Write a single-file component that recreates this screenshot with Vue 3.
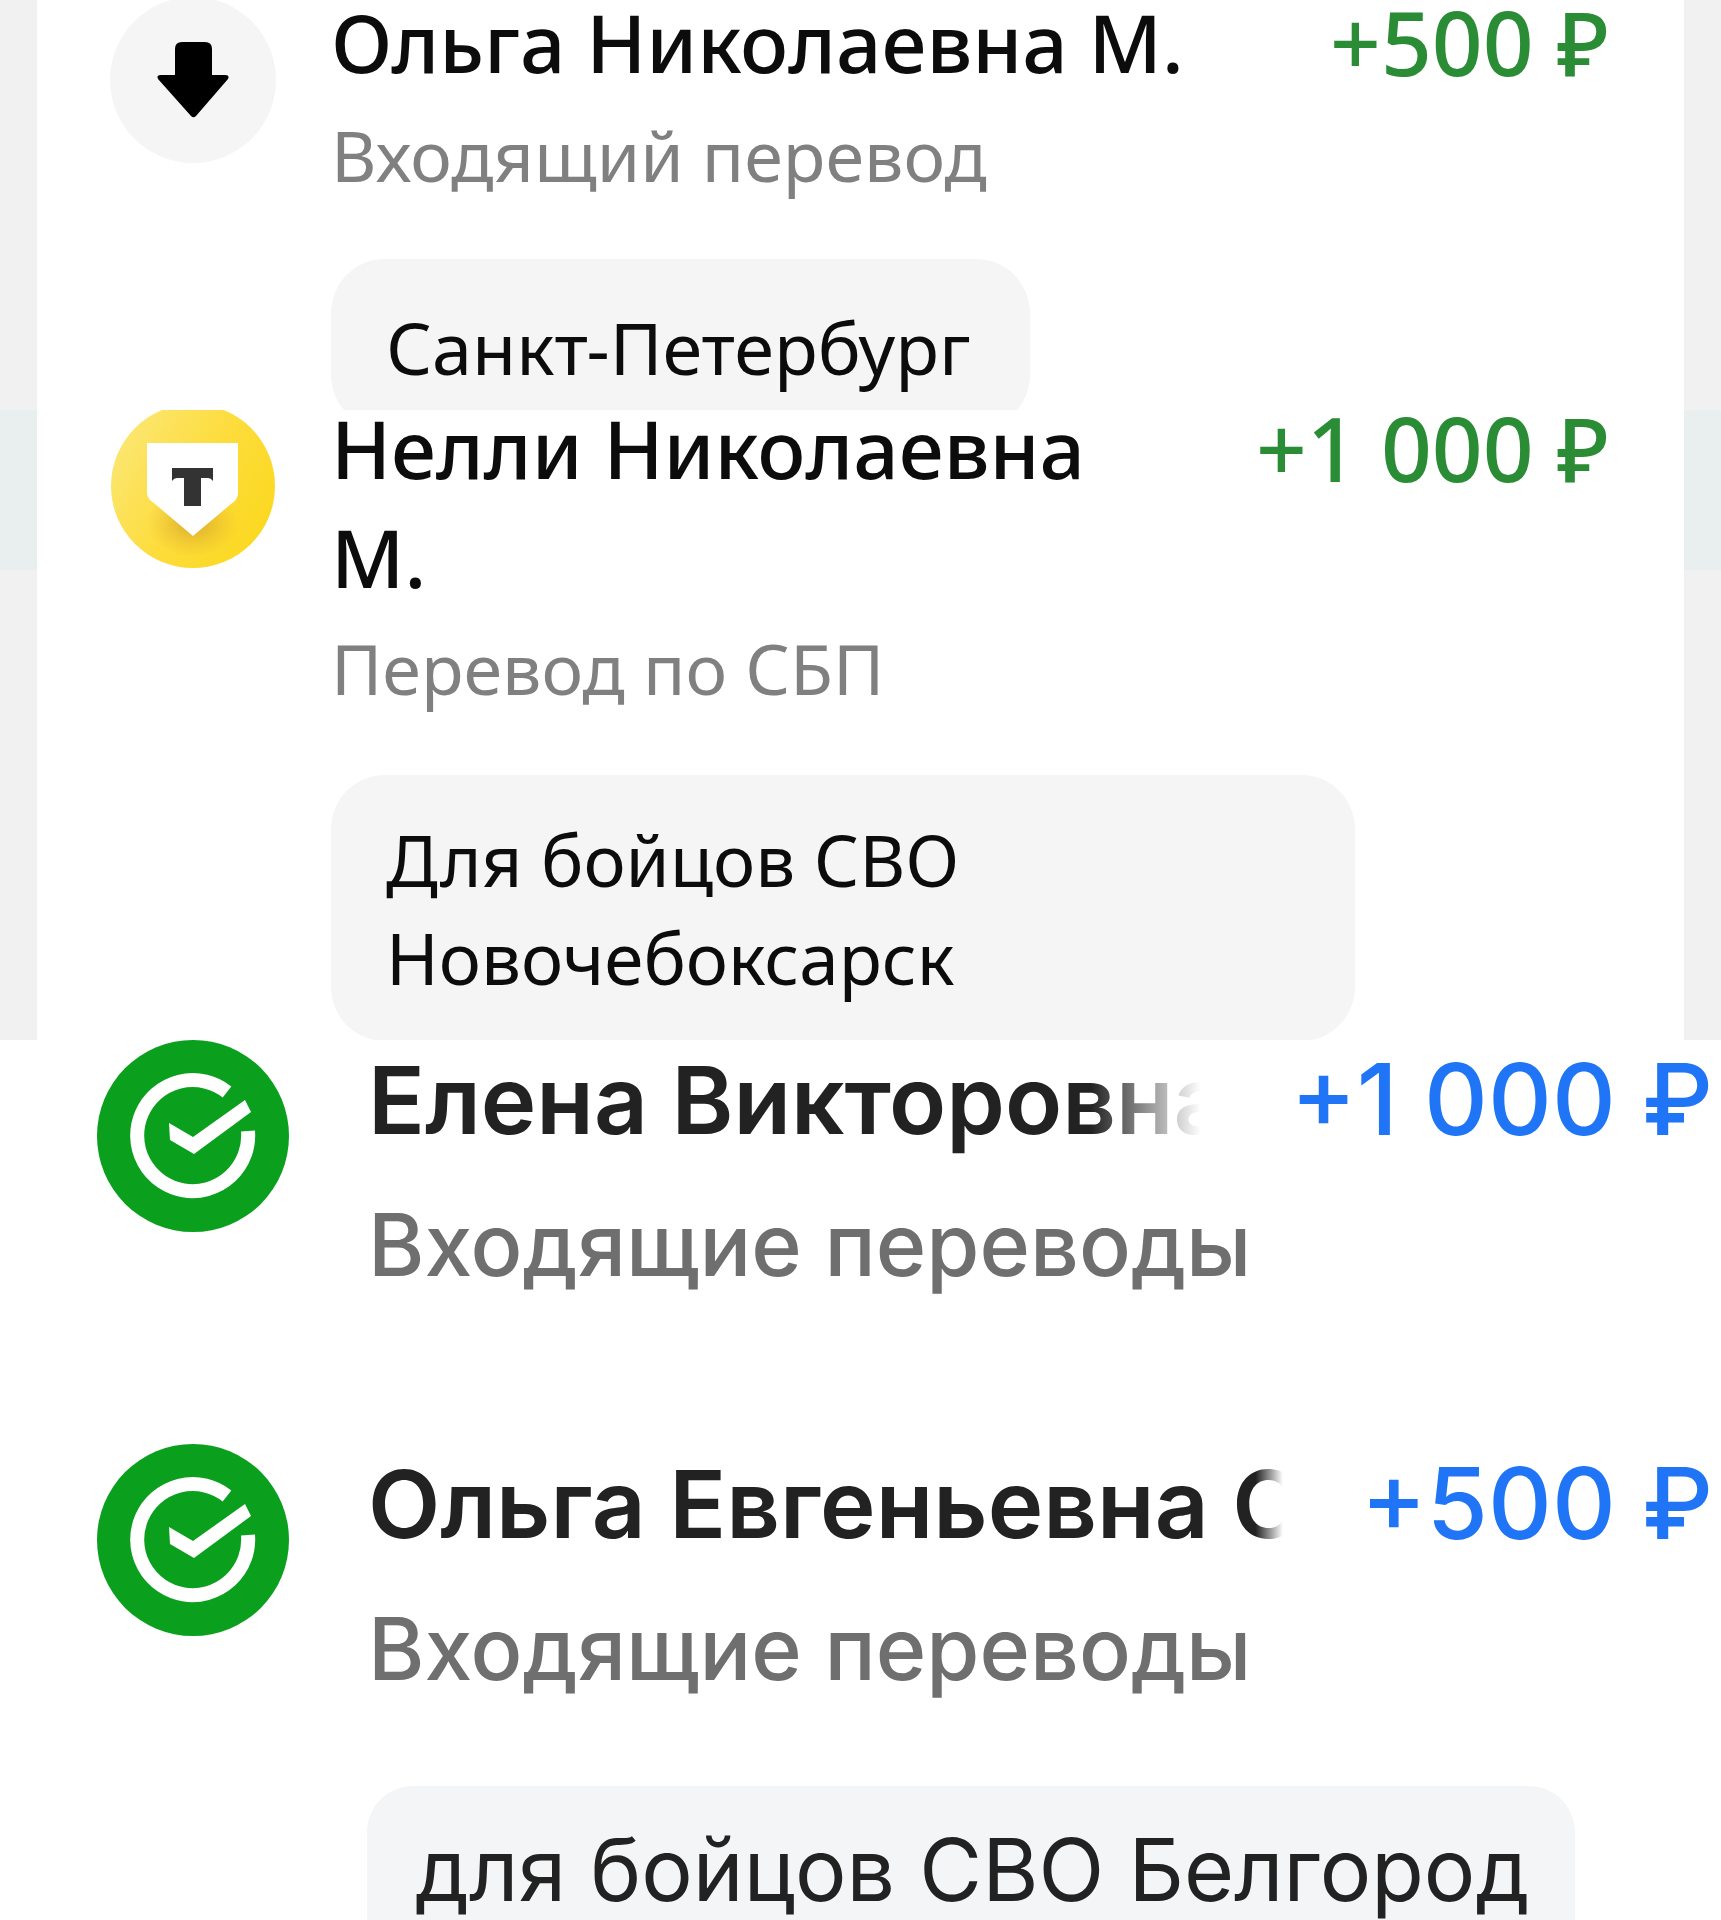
<template>
  <div class="page">
    <section class="strip first">
      <div class="inner">
        <div class="row">
          <div class="round grey">
            <svg viewBox="0 0 166 166" width="166" height="166">
              <path d="M65 52q0-7 7-7h23q7 0 7 7v26h13q5 0 3 4L86 119q-2.500 2.500-5 0L48 82q-2-4 3-4h14z" fill="#000" />
            </svg>
          </div>
          <div class="body">
            <div class="name">Ольга Николаевна М.</div>
            <div class="sub">Входящий перевод</div>
          </div>
          <div class="amount">+500 ₽</div>
        </div>
        <div class="bubble spb">Санкт-Петербург</div>
      </div>
    </section>

    <section class="strip second">
      <div class="inner">
        <div class="row">
          <div class="round">
            <svg viewBox="0 0 166 166" width="166" height="166">
              <defs>
                <linearGradient id="tyellow" x1="0" y1="0" x2="1" y2="0.6">
                  <stop offset="0" stop-color="#fbe97f" />
                  <stop offset="0.6" stop-color="#fddc3c" />
                  <stop offset="1" stop-color="#fbd923" />
                </linearGradient>
                <radialGradient id="tshade" cx="0.5" cy="0.5" r="0.5">
                  <stop offset="0" stop-color="#c9952a" stop-opacity="0.7" />
                  <stop offset="1" stop-color="#e0b030" stop-opacity="0" />
                </radialGradient>
              </defs>
              <circle cx="83" cy="83" r="82" fill="url(#tyellow)" />
              <ellipse cx="83" cy="120" rx="46" ry="34" fill="url(#tshade)" />
              <path d="M37 40h91v50q0 7-7 11l-38 32-38-32q-8-5-8-11z" fill="#fff" />
              <path d="M62 65h41v13q-2-3-5-3h-7v28H74V75h-7q-3 0-5 3z" fill="#333" />
            </svg>
          </div>
          <div class="body">
            <div class="name narrow">Нелли Николаевна М.</div>
            <div class="sub">Перевод по СБП</div>
          </div>
          <div class="amount">+1 000 ₽</div>
        </div>
        <div class="bubble svo">Для бойцов СВО<br />Новочебоксарск</div>
      </div>
    </section>

    <section class="bank">
      <div v-for="item in transfers" :key="item.name" class="bank-row">
        <svg class="sber" viewBox="0 0 192 192" width="192" height="192">
          <circle cx="96" cy="96" r="96" fill="#0aa01e" />
          <path d="M130 52A55.500 55.500 0 1 0 151 91" fill="none" stroke="#fff" stroke-width="14" />
          <path d="M72 83l24 14 52-37 6 12-57 42-24-14z" fill="#fff" />
        </svg>
        <div class="bank-body">
          <div class="bank-name" :class="item.cut">{{ item.name }}</div>
          <div class="bank-sub">Входящие переводы</div>
        </div>
        <div class="bank-amount">{{ item.amount }}</div>
      </div>
      <div class="bank-bubble">для бойцов СВО Белгород</div>
    </section>
  </div>
</template>

<script setup>
const transfers = [
  { name: 'Елена Викторовна', amount: '+1 000 ₽', cut: 'fade-long' },
  { name: 'Ольга Евгеньевна С', amount: '+500 ₽', cut: 'fade-short' }
]
</script>

<style scoped>
.page {
  width: 1721px;
  height: 1920px;
  overflow: hidden;
  background: #fff;
  font-family: "Noto Sans", "Open Sans", sans-serif;
}

.strip {
  box-sizing: border-box;
  padding: 0 37px;
  overflow: hidden;
  background: #f1f1f1;
}

.inner {
  height: 100%;
  overflow: hidden;
  background: #fff;
}

.first {
  height: 410px;
}

.second {
  height: 630px;
  background: linear-gradient(#e9eeee 0, #e9eeee 160px, #f1f1f1 160px);
}

.row {
  display: flex;
  align-items: flex-start;
  padding: 0 75px 0 73px;
}

.round {
  flex: none;
  width: 166px;
  height: 166px;
  border-radius: 50%;
  margin-top: -7px;
}

.first .round {
  margin-top: -3px;
}

.round svg {
  display: block;
}

.grey {
  background: #f5f5f5;
}

.body {
  flex: 1;
  min-width: 0;
  margin-left: 55px;
}

.name {
  font-size: 80px;
  font-weight: 500;
  line-height: 84px;
  color: #0c0c0c;
}

.narrow {
  width: 790px;
  line-height: 109px;
  margin-top: -17px;
}

.sub {
  font-size: 70px;
  line-height: 90px;
  color: #808080;
  margin-top: 26px;
}

.second .sub {
  margin-top: 12px;
}

.amount {
  flex: none;
  font-size: 89px;
  font-weight: 500;
  line-height: 84px;
  color: #2a8c35;
}

.second .amount {
  line-height: 76px;
}

.bubble {
  box-sizing: border-box;
  background: #f5f5f5;
  border-radius: 54px;
  color: #0c0c0c;
  font-size: 71px;
  line-height: 98px;
  padding-left: 55px;
}

.spb {
  width: 699px;
  margin-left: 294px;
  margin-top: 59px;
  height: 170px;
  padding-top: 39px;
  font-size: 72px;
}

.svo {
  width: 1024px;
  margin-left: 294px;
  margin-top: 62px;
  height: 266px;
  padding-top: 36px;
}

.bank {
  height: 880px;
  padding-left: 97px;
}

.bank-row {
  display: flex;
  align-items: flex-start;
  height: 404px;
}

.sber {
  flex: none;
  display: block;
}

.bank-body {
  flex: none;
  width: 920px;
  margin-left: 79px;
}

.bank-name {
  font-family: Inter, "Noto Sans", sans-serif;
  font-size: 94px;
  font-weight: 600;
  line-height: 110px;
  color: #222;
  white-space: nowrap;
  overflow: hidden;
  margin-top: 5px;
}

.fade-long {
  width: 850px;
  -webkit-mask-image: linear-gradient(90deg, #000 85%, transparent 98%);
  mask-image: linear-gradient(90deg, #000 85%, transparent 98%);
}

.fade-short {
  width: 915px;
  -webkit-mask-image: linear-gradient(90deg, #000 97%, transparent 100%);
  mask-image: linear-gradient(90deg, #000 97%, transparent 100%);
}

.bank-sub {
  font-family: Inter, "Noto Sans", sans-serif;
  font-size: 86px;
  font-weight: 500;
  line-height: 100px;
  color: #6f6f6f;
  margin-top: 40px;
}

.bank-amount {
  margin-left: auto;
  padding-right: 8px;
  margin-top: 4px;
  font-family: Inter, "Noto Sans", sans-serif;
  font-size: 99px;
  font-weight: 500;
  line-height: 110px;
  white-space: nowrap;
  color: #1f75f5;
}

.bank-bubble {
  box-sizing: border-box;
  width: 1208px;
  height: 200px;
  margin-left: 270px;
  margin-top: -62px;
  padding: 34px 0 0 48px;
  border-radius: 46px;
  background: #f4f5f6;
  font-family: Inter, "Noto Sans", sans-serif;
  font-size: 86px;
  line-height: 100px;
  color: #222;
}
</style>
